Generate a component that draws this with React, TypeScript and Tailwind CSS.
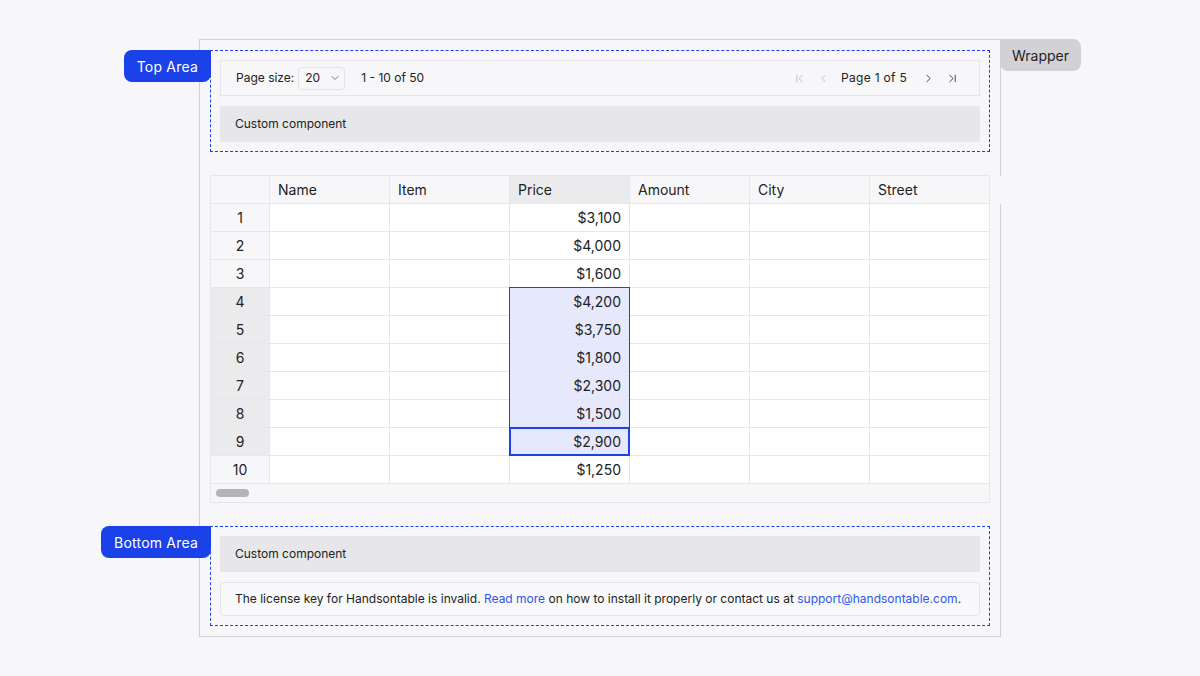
import { ChevronDown, ChevronFirst, ChevronLast, ChevronLeft, ChevronRight } from 'lucide-react';

const columns = ['Name', 'Item', 'Price', 'Amount', 'City', 'Street'];
const prices = [3100, 4000, 1600, 4200, 3750, 1800, 2300, 1500, 2900, 1250];

function formatPrice(value: number): string {
    return '$' + value.toLocaleString('en-US');
}

function Pagination() {
    return (
        <div className="flex items-center justify-between h-[36px] border border-[#e5e5e8] pl-[15px] pr-[15px] text-[12px] text-[#222]">
            <div className="flex items-center">
                <span>Page size:</span>
                <div className="ml-[4px] flex items-center h-[23px] w-[47px] border border-[#e2e2e5] rounded-[4px] pl-[6px]">
                    <span>20</span>
                    <ChevronDown size={12} strokeWidth={1.5} className="ml-[9px] text-[#555]" />
                </div>
                <span className="ml-[16px]">1 - 10 of 50</span>
            </div>
            <div className="flex items-center">
                <span className="w-[24px] flex justify-center text-[#b5b5ba]"><ChevronFirst size={13} strokeWidth={1.5} /></span>
                <span className="w-[24px] flex justify-center text-[#b5b5ba]"><ChevronLeft size={13} strokeWidth={1.5} /></span>
                <span className="ml-[6px] mr-[9px] tracking-[0.3px]">Page 1 of 5</span>
                <span className="w-[24px] flex justify-center text-[#222]"><ChevronRight size={13} strokeWidth={1.5} /></span>
                <span className="w-[24px] flex justify-center text-[#222]"><ChevronLast size={13} strokeWidth={1.5} /></span>
            </div>
        </div>
    );
}

function CustomComponent() {
    return (
        <div className="flex items-center h-[36px] bg-[#e7e7e9] px-[15px] text-[12px] text-[#222]">
            Custom component
        </div>
    );
}

function Grid() {
    return (
        <div className="w-[780px] border-l border-t border-[#e7e7e9] text-[14px] text-[#222]">
            <div className="grid grid-cols-[59px_repeat(6,120px)]">
                <div className="h-[28px] bg-[#f7f7f9] border-r border-b border-[#e7e7e9]" />
                {columns.map((col, i) => (
                    <div
                        key={col}
                        className={
                            'relative h-[28px] flex items-center pl-[8px] border-r border-b border-[#e7e7e9] ' +
                            (col === 'Price' ? 'bg-[#ebebed]' : 'bg-[#f7f7f9]')
                        }
                    >
                        {col}
                        {i === columns.length - 1 && (
                            <div className="absolute left-[calc(100%+1px)] top-0 w-[11px] h-[28px] bg-[#f7f7f9]" />
                        )}
                    </div>
                ))}
                {prices.map((price, r) => {
                    const selected = r >= 3 && r <= 8;
                    return [
                        <div
                            key={'h' + r}
                            className={
                                'h-[28px] flex items-center justify-center border-r border-b border-[#e7e7e9] ' +
                                (selected ? 'bg-[#ebebed]' : 'bg-[#f7f7f9]')
                            }
                        >
                            {r + 1}
                        </div>,
                        ...columns.map((col) => {
                            if (col !== 'Price') {
                                return <div key={col + r} className="h-[28px] bg-white border-r border-b border-[#e7e7e9]" />;
                            }
                            return (
                                <div
                                    key={col + r}
                                    className={
                                        'relative h-[28px] flex items-center justify-end pr-[8px] border-r border-b border-[#e7e7e9] ' +
                                        (selected ? 'bg-[#e6e9fc]' : 'bg-white')
                                    }
                                >
                                    {formatPrice(price)}
                                    {r === 3 && <div className="absolute -left-px -top-px -right-px -bottom-px border-l border-r border-t border-[#1a42e8]" />}
                                    {r > 3 && r < 8 && <div className="absolute -left-px -top-px -right-px -bottom-px border-l border-r border-[#1a42e8]" />}
                                    {r === 8 && <div className="absolute -left-px -top-px -right-px -bottom-px border-2 border-[#1a42e8]" />}
                                </div>
                            );
                        }),
                    ];
                })}
            </div>
            <div className="h-[19px] border-r border-b border-[#e7e7e9] bg-[#f7f7f9] pl-[5px] pt-[5px]">
                <div className="w-[33px] h-[8px] rounded-full bg-[#b4b4b8]" />
            </div>
        </div>
    );
}

function Tag({ label }: { label: string }) {
    return (
        <div className="absolute right-full -top-px h-[32px] flex items-center whitespace-nowrap px-[13px] rounded-l-[8px] rounded-br-[8px] bg-[#1a42e8] text-white text-[14px] tracking-[0.2px]">
            {label}
        </div>
    );
}

export default function App() {
    return (
        <main className="min-h-screen w-full bg-[#f7f7f9] pt-[39px] pl-[199px] font-['Inter','Liberation_Sans',sans-serif]">
            <div className="relative w-[802px] border border-[#d2d2d6] p-[10px]">
                <div className="absolute left-full -top-px h-[32px] flex items-center whitespace-nowrap px-[12px] rounded-r-[8px] rounded-bl-[8px] bg-[#d2d2d6] text-[#222] text-[14px]">
                    Wrapper
                </div>
                <div className="relative border border-dashed border-[#1a42e8] p-[9px] flex flex-col gap-[10px]">
                    <Tag label="Top Area" />
                    <Pagination />
                    <CustomComponent />
                </div>
                <div className="mt-[23px]">
                    <Grid />
                </div>
                <div className="relative mt-[23px] border border-dashed border-[#1a42e8] p-[9px] flex flex-col gap-[10px]">
                    <Tag label="Bottom Area" />
                    <CustomComponent />
                    <div className="flex items-center h-[34px] border border-[#e5e5e8] rounded-[4px] bg-[#f9f9fb] px-[14px] text-[12px] text-[#222] whitespace-nowrap">
                        <span>
                            The license key for Handsontable is invalid.{' '}
                            <span className="text-[#2f57e8]">Read more</span> on how to install it properly or contact us at{' '}
                            <span className="text-[#2f57e8]">support@handsontable.com</span>.
                        </span>
                    </div>
                </div>
            </div>
        </main>
    );
}
